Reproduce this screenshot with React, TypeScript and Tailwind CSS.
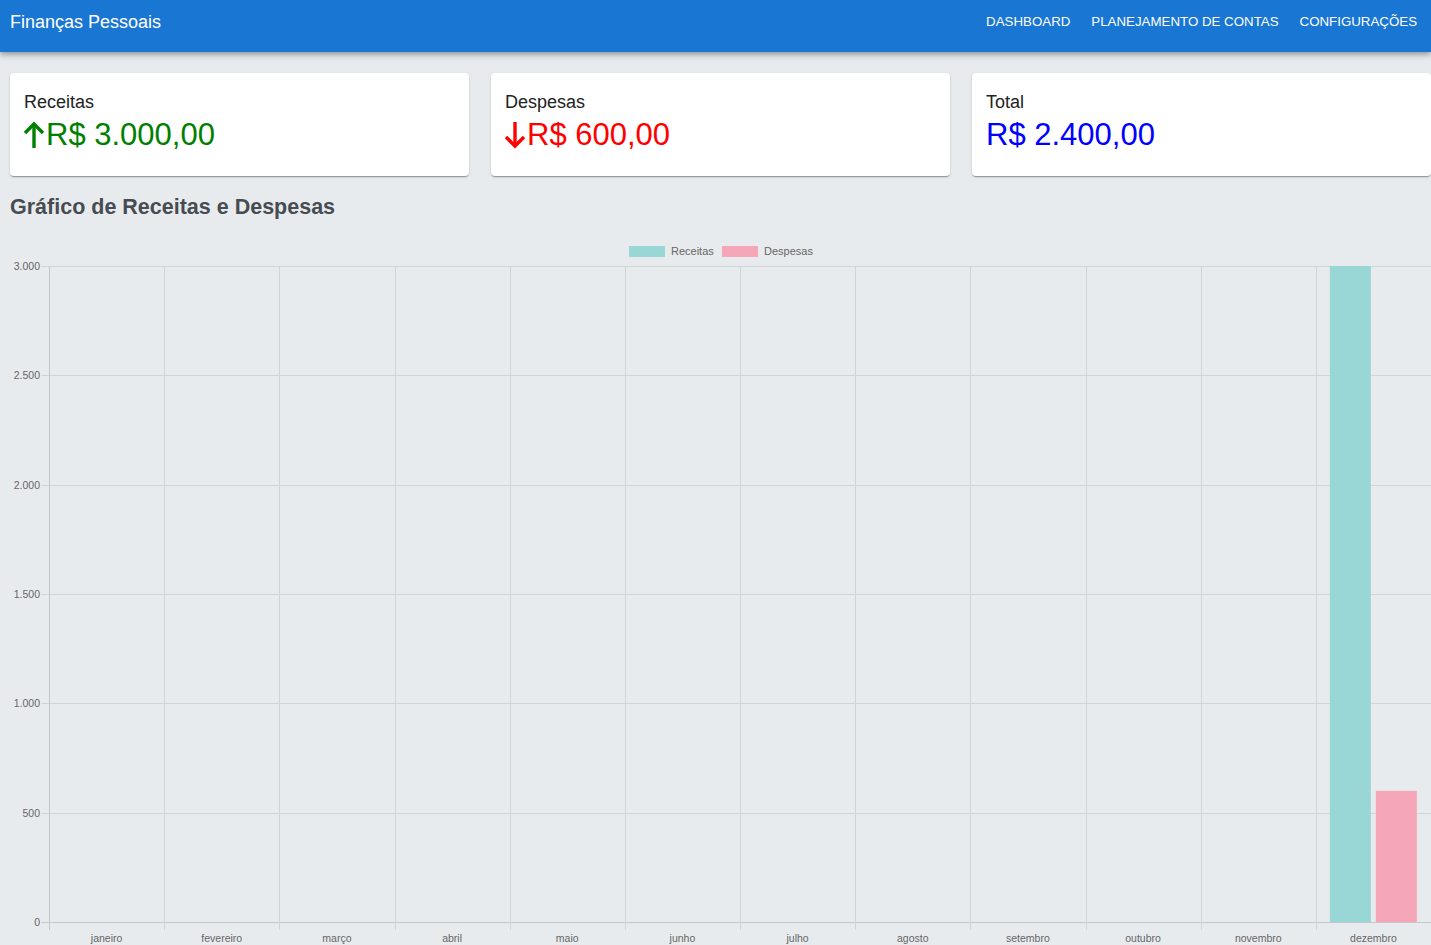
import React from "react";

const months = [
  "janeiro",
  "fevereiro",
  "março",
  "abril",
  "maio",
  "junho",
  "julho",
  "agosto",
  "setembro",
  "outubro",
  "novembro",
  "dezembro",
];

const receitas = [0, 0, 0, 0, 0, 0, 0, 0, 0, 0, 0, 3000];
const despesas = [0, 0, 0, 0, 0, 0, 0, 0, 0, 0, 0, 600];

function ArrowUp() {
  return (
    <svg width="22" height="28" viewBox="0 0 22 28" className="mr-[1px] -ml-[1px]">
      <g fill="none" stroke="#008000" strokeWidth="3.4">
        <line x1="11" y1="3" x2="11" y2="27" />
        <polyline points="2,12 11,3 20,12" />
      </g>
    </svg>
  );
}

function ArrowDown() {
  return (
    <svg width="22" height="28" viewBox="0 0 22 28" className="mr-[1px] -ml-[1px]">
      <g fill="none" stroke="#ff0000" strokeWidth="3.4">
        <line x1="11" y1="1" x2="11" y2="25" />
        <polyline points="2,16 11,25 20,16" />
      </g>
    </svg>
  );
}

function Chart() {
  // chart geometry, in page px with the svg starting at y = 236
  const top = 236;
  const left = 49;
  const right = 1431;
  const y0 = 922 - top;
  const yMax = 266 - top;
  const colW = (right - left) / 12;
  const yFor = (v: number) => y0 - ((y0 - yMax) * v) / 3000;
  const ticks = [0, 500, 1000, 1500, 2000, 2500, 3000];

  return (
    <svg width="1431" height="709" className="block" style={{ fontFamily: "'Liberation Sans', Arial, sans-serif" }}>
      {/* legend */}
      <rect x="629.5" y="10.5" width="35" height="10" fill="#99d6d6" stroke="#9ad8d8" />
      <text x="671" y="19" fontSize="11" fill="#666">Receitas</text>
      <rect x="722.5" y="10.5" width="35" height="10" fill="#f5a6b7" stroke="#f7a8b8" />
      <text x="764" y="19" fontSize="11" fill="#666">Despesas</text>

      {/* horizontal grid */}
      {ticks.map((t) => (
        <g key={t}>
          <line x1={41} x2={right} y1={Math.round(yFor(t)) + 0.5} y2={Math.round(yFor(t)) + 0.5} stroke={t === 0 ? "#c4c7ca" : "#d2d5d8"} />
          <text x={40} y={Math.round(yFor(t)) + 4} fontSize="10.5" fill="#666" textAnchor="end">
            {t === 0 ? "0" : t.toLocaleString("pt-BR")}
          </text>
        </g>
      ))}

      {/* vertical grid */}
      {Array.from({ length: 13 }).map((_, i) => (
        <line
          key={i}
          x1={Math.round(left + colW * i) + 0.5}
          x2={Math.round(left + colW * i) + 0.5}
          y1={yMax}
          y2={y0 + 8}
          stroke={i === 0 ? "#c4c7ca" : "#d2d5d8"}
        />
      ))}

      {/* bars */}
      {months.map((m, i) => {
        const cx = left + colW * i;
        return (
          <g key={m}>
            {receitas[i] > 0 && (
              <rect x={cx + 14} y={yFor(receitas[i])} width={41} height={y0 - yFor(receitas[i])} fill="#99d6d6" />
            )}
            {despesas[i] > 0 && (
              <rect x={cx + 60} y={yFor(despesas[i])} width={41} height={y0 - yFor(despesas[i])} fill="#f5a6b7" />
            )}
            <text x={cx + colW / 2} y={706} fontSize="10.5" fill="#666" textAnchor="middle">
              {m}
            </text>
          </g>
        );
      })}
    </svg>
  );
}

function SummaryCard({ label, value, color, icon }: { label: string; value: string; color: string; icon?: React.ReactNode }) {
  return (
    <div className="bg-white rounded-[4px] shadow-[0_2px_1px_-1px_rgba(0,0,0,0.2),0_1px_1px_0_rgba(0,0,0,0.14),0_1px_3px_0_rgba(0,0,0,0.12)] h-[103px] px-[14px] pt-[18px]">
      <div className="text-[18px] leading-[22px] text-[#222]">{label}</div>
      <div className={`flex items-center text-[31px] leading-[36px] mt-[4px] ${color}`}>
        {icon}
        <span>{value}</span>
      </div>
    </div>
  );
}

export default function App() {
  return (
    <div className="min-h-screen bg-[#e8ebee] overflow-hidden" style={{ fontFamily: "'Liberation Sans', Arial, sans-serif" }}>
      <header className="h-[52px] bg-[#1976d2] text-white shadow-[0_2px_4px_-1px_rgba(0,0,0,0.2),0_4px_5px_0_rgba(0,0,0,0.14),0_1px_10px_0_rgba(0,0,0,0.12)] flex items-start justify-between pl-[10px] pr-[14px] relative z-10">
        <div className="h-[44px] flex items-center text-[18px]">Finanças Pessoais</div>
        <nav className="h-[44px] flex items-center gap-[21px] text-[13.3px] uppercase">
          <span>Dashboard</span>
          <span>Planejamento de Contas</span>
          <span>Configurações</span>
        </nav>
      </header>

      <main className="pl-[10px]">
        <div className="grid grid-cols-3 gap-[22px] mt-[21px]">
          <SummaryCard label="Receitas" value="R$ 3.000,00" color="text-[#008000]" icon={<ArrowUp />} />
          <SummaryCard label="Despesas" value="R$ 600,00" color="text-[#ff0000]" icon={<ArrowDown />} />
          <SummaryCard label="Total" value="R$ 2.400,00" color="text-[#0000ff]" />
        </div>

        <h2 className="mt-[18px] text-[21.5px] leading-[26px] font-bold text-[#474c52]">Gráfico de Receitas e Despesas</h2>
      </main>

      <div className="mt-[16px]">
        <Chart />
      </div>
    </div>
  );
}
